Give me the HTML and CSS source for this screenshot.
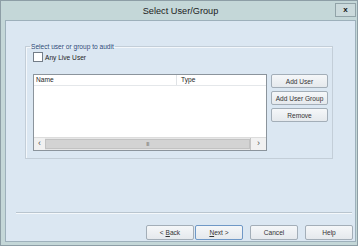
FILE: index.html
```html
<!DOCTYPE html>
<html lang="en">
  <head>
    <meta charset="utf-8">
    <title>Select User/Group</title>
    <link rel="stylesheet" href="styles.css">
  </head>
  <body>
    <div class="window">
      <div class="titlebar">
        <span></span>
        <span class="title">Select User/Group</span>
        <span class="close-btn">x</span>
      </div>
      <div class="client">
        <fieldset class="group">
          <legend>Select user or group to audit</legend>
          <label class="check"><span class="check-box"></span>Any Live User</label>
          <div class="group-row">
            <div class="list">
              <div class="list-head">
                <span class="col-name">Name</span>
                <span class="col-type">Type</span>
              </div>
              <div class="list-body"></div>
              <div class="hscroll">
                <span class="arrow">&lsaquo;</span>
                <span class="thumb">III</span>
                <span class="arrow arrow-right">&rsaquo;</span>
              </div>
            </div>
            <div class="side-buttons">
              <button class="win-btn">Add User</button>
              <button class="win-btn">Add User Group</button>
              <button class="win-btn">Remove</button>
            </div>
          </div>
        </fieldset>
        <div class="separator"></div>
        <div class="footer">
          <button class="win-btn foot-btn">&lt; <u>B</u>ack</button>
          <button class="win-btn foot-btn default-btn"><u>N</u>ext &gt;</button>
          <button class="win-btn foot-btn gap">Cancel</button>
          <button class="win-btn foot-btn gap">Help</button>
        </div>
      </div>
    </div>
  </body>
</html>
```

FILE: styles.css
```css
body {
  margin: 0;
  background: #ffffff;
  font-family: "Liberation Sans", Arial, sans-serif;
}

.window {
  width: 358px;
  height: 246px;
  box-sizing: border-box;
  background: #c4d7d8;
  border: 1px solid #8d9ea6;
  padding: 0 1px 3px 4px;
  display: flex;
  flex-direction: column;
}

.titlebar {
  height: 19px;
  display: grid;
  grid-template-columns: 1fr auto 1fr;
  align-items: center;
}

.title {
  font-size: 9.2px;
  color: #1b1b1b;
}

.close-btn {
  justify-self: end;
  width: 21px;
  height: 14px;
  margin-top: -1px;
  box-sizing: border-box;
  border: 1px solid #91a3a8;
  background: #cbdadc;
  font-size: 8px;
  font-weight: bold;
  line-height: 12px;
  text-align: center;
  color: #111;
}

.client {
  flex: 1;
  background: #dbe7f2;
  border: 1px solid #9db0bb;
  display: flex;
  flex-direction: column;
}

.group {
  margin: 22px 22px 0 19px;
  padding: 2px 3px 6px 7px;
  border: 1px solid #c3ced8;
  box-shadow: inset 1px 1px 0 #f3f7fb;
  height: 116px;
  box-sizing: border-box;
}

.group legend {
  padding: 0 1px;
  margin-left: -3px;
  font-size: 6.6px;
  color: #2d4a78;
}

.check {
  display: flex;
  align-items: center;
  gap: 2px;
  font-size: 6.6px;
  color: #1e1e1e;
}

.check-box {
  width: 8px;
  height: 8px;
  background: #ffffff;
  border: 1px solid #737d88;
}

.group-row {
  display: flex;
  gap: 4px;
  margin-top: 12px;
}

.list {
  width: 234px;
  height: 77px;
  box-sizing: border-box;
  border: 1px solid #8b949c;
  background: #ffffff;
  display: flex;
  flex-direction: column;
}

.list-head {
  height: 10px;
  display: flex;
  font-size: 6.6px;
  color: #1e1e1e;
  border-bottom: 1px solid #e4e7ea;
}

.col-name {
  width: 140px;
  padding-left: 2px;
  border-right: 1px solid #e0e3e6;
  line-height: 10px;
}

.col-type {
  padding-left: 4px;
  line-height: 10px;
}

.list-body {
  flex: 1;
}

.hscroll {
  height: 12px;
  display: flex;
  background: #e6e6e6;
  border-top: 1px solid #dcdcdc;
}

.arrow {
  width: 11px;
  font-size: 9px;
  line-height: 11px;
  text-align: center;
  color: #555;
  background: #f1f1f1;
}

.arrow-right {
  width: 15px;
  border-left: 1px solid #c4c4c4;
}

.thumb {
  flex: 1;
  margin: 1px 0;
  background: #d3d3d3;
  border: 1px solid #c2c2c2;
  font-size: 5px;
  line-height: 9px;
  text-align: center;
  letter-spacing: -0.5px;
  color: #666;
}

.side-buttons {
  display: flex;
  flex-direction: column;
  gap: 3px;
}

.win-btn {
  width: 57px;
  height: 14px;
  padding: 0;
  box-sizing: border-box;
  border: 1px solid #a3aeb8;
  border-radius: 2px;
  background: linear-gradient(#f5f7f9, #e5e9ed);
  font-family: "Liberation Sans", Arial, sans-serif;
  font-size: 6.6px;
  color: #333;
}

.separator {
  margin: 53px 3px 0 10px;
  height: 1px;
  background: #b9c5cf;
  border-bottom: 1px solid #f4f8fb;
}

.footer {
  display: flex;
  justify-content: flex-end;
  gap: 1px;
  margin-top: 11px;
  padding-right: 2px;
}

.foot-btn {
  width: 48px;
  height: 15px;
}

.default-btn {
  border-color: #6f98c6;
}

.gap {
  margin-left: 6px;
}
```
